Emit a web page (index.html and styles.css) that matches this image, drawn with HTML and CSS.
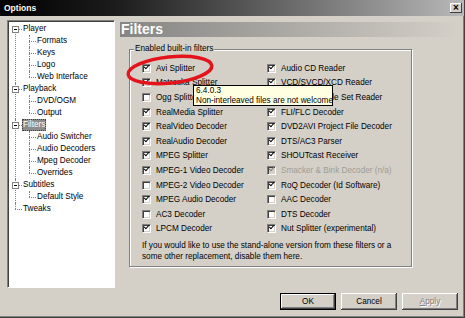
FILE: index.html
```html
<!DOCTYPE html>
<html lang="en">
<head>
    <meta charset="UTF-8">
    <title>Options</title>
    <link rel="stylesheet" href="styles.css">
</head>
<body>
    <div class="window">
        <div class="titlebar">
            <span class="title">Options</span>
            <span class="close">&times;</span>
        </div>

        <div class="content">
            <div class="tree-panel">
                <ul class="tree">
                    <li><span class="exp"></span><span class="label">Player</span>
                        <ul>
                            <li><span class="label">Formats</span></li>
                            <li><span class="label">Keys</span></li>
                            <li><span class="label">Logo</span></li>
                            <li><span class="label">Web Interface</span></li>
                        </ul>
                    </li>
                    <li><span class="exp"></span><span class="label">Playback</span>
                        <ul>
                            <li><span class="label">DVD/OGM</span></li>
                            <li><span class="label">Output</span></li>
                        </ul>
                    </li>
                    <li><span class="exp"></span><span class="label selected">Filters</span>
                        <ul>
                            <li><span class="label">Audio Switcher</span></li>
                            <li><span class="label">Audio Decoders</span></li>
                            <li><span class="label">Mpeg Decoder</span></li>
                            <li><span class="label">Overrides</span></li>
                        </ul>
                    </li>
                    <li><span class="exp"></span><span class="label">Subtitles</span>
                        <ul>
                            <li><span class="label">Default Style</span></li>
                        </ul>
                    </li>
                    <li><span class="label">Tweaks</span></li>
                </ul>
            </div>

            <div class="page">
                <div class="page-header">Filters</div>

                <div class="group">
                    <div class="legend">Enabled built-in filters</div>
                    <div class="filters">
                        <label class="item"><span class="cb on"></span>Avi Splitter</label>
                        <label class="item"><span class="cb on"></span>Matroska Splitter</label>
                        <label class="item"><span class="cb"></span>Ogg Splitter</label>
                        <label class="item"><span class="cb on"></span>RealMedia Splitter</label>
                        <label class="item"><span class="cb on"></span>RealVideo Decoder</label>
                        <label class="item"><span class="cb on"></span>RealAudio Decoder</label>
                        <label class="item"><span class="cb on"></span>MPEG Splitter</label>
                        <label class="item"><span class="cb on"></span>MPEG-1 Video Decoder</label>
                        <label class="item"><span class="cb"></span>MPEG-2 Video Decoder</label>
                        <label class="item"><span class="cb on"></span>MPEG Audio Decoder</label>
                        <label class="item"><span class="cb"></span>AC3 Decoder</label>
                        <label class="item"><span class="cb on"></span>LPCM Decoder</label>

                        <label class="item"><span class="cb on"></span>Audio CD Reader</label>
                        <label class="item"><span class="cb on"></span>VCD/SVCD/XCD Reader</label>
                        <label class="item"><span class="cb on"></span>DVD Video Title Set Reader</label>
                        <label class="item"><span class="cb on"></span>FLI/FLC Decoder</label>
                        <label class="item"><span class="cb on"></span>DVD2AVI Project File Decoder</label>
                        <label class="item"><span class="cb on"></span>DTS/AC3 Parser</label>
                        <label class="item"><span class="cb on"></span>SHOUTcast Receiver</label>
                        <label class="item disabled"><span class="cb on"></span>Smacker &amp; Bink Decoder (n/a)</label>
                        <label class="item"><span class="cb on"></span>RoQ Decoder (Id Software)</label>
                        <label class="item"><span class="cb"></span>AAC Decoder</label>
                        <label class="item"><span class="cb"></span>DTS Decoder</label>
                        <label class="item"><span class="cb on"></span>Nut Splitter (experimental)</label>
                    </div>
                    <p class="note">If you would like to use the stand-alone version from these filters or a<br>some other replacement, disable them here.</p>
                </div>

                <!-- tooltip shown over the Avi Splitter row -->
                <div class="tooltip">6.4.0.3<br>Non-interleaved files are not welcome</div>

                <!-- red marker circled round the first filter -->
                <svg class="highlight" width="92" height="36" viewBox="0 0 92 36">
                    <ellipse cx="46" cy="18" rx="42" ry="13" transform="rotate(-6 46 18)"
                             fill="none" stroke="#e3141c" stroke-width="3.6"/>
                </svg>
            </div>
        </div>

        <div class="buttons">
            <button class="btn default">OK</button>
            <button class="btn">Cancel</button>
            <button class="btn" disabled><u>A</u>pply</button>
        </div>
    </div>
</body>
</html>
```

FILE: styles.css
```css
body {
    margin: 0;
    font-family: "Liberation Sans", Arial, sans-serif;
    font-size: 8.2px;
    color: #000;
    background-color: #d4d0c8;
}
.window {
    width: 465px;
    height: 318px;
    box-sizing: border-box;
    background-color: #d4d0c8;
    border-right: 1px solid #404040;
    border-bottom: 1px solid #404040;
    box-shadow: inset -1px -1px #808080;
    overflow: hidden;
}
.titlebar {
    height: 16px;
    display: flex;
    align-items: center;
    justify-content: space-between;
    padding: 0 2px 0 4px;
    background: linear-gradient(to right, #000 0%, #1c1c1c 25%, #b8b8b8 100%);
}
.title {
    color: #fff;
    font-weight: bold;
    font-size: 8.5px;
}
.close {
    width: 12px;
    height: 10px;
    line-height: 10px;
    text-align: center;
    font-size: 10px;
    font-weight: bold;
    background-color: #d4d0c8;
    box-shadow: inset -1px -1px #404040, inset 1px 1px #fff;
}
.content {
    display: flex;
    gap: 5px;
    padding: 4px 0 0 7px;
}

/* tree */
.tree-panel {
    width: 108px;
    height: 268px;
    box-sizing: border-box;
    background-color: #fff;
    border: 1px solid;
    border-color: #808080 #fff #fff #808080;
    box-shadow: inset 1px 1px #404040;
}
.tree, .tree ul {
    list-style: none;
    margin: 0;
    padding: 0;
}
.tree {
    padding-top: 2px;
}
.tree li {
    position: relative;
    padding-left: 14px;
}
.tree li::before {
    content: '';
    position: absolute;
    left: 7px;
    top: 0;
    bottom: 0;
    border-left: 1px dotted #808080;
}
.tree > li:first-child::before {
    top: 6px;
}
.tree li:last-child::before {
    bottom: auto;
    height: 6px;
}
.tree li::after {
    content: '';
    position: absolute;
    left: 7px;
    top: 6px;
    width: 7px;
    border-top: 1px dotted #808080;
}
.exp {
    position: absolute;
    left: 4px;
    top: 3px;
    width: 7px;
    height: 7px;
    box-sizing: border-box;
    border: 1px solid #808080;
    background-color: #fff;
    z-index: 1;
}
.exp::after {
    content: '';
    position: absolute;
    left: 1px;
    top: 2px;
    width: 3px;
    border-top: 1px solid #000;
}
.label {
    display: inline-block;
    height: 12px;
    line-height: 12px;
    padding: 0 1px;
    white-space: nowrap;
}
.label.selected {
    background-color: #8c8c8c;
    color: #fff;
    outline: 1px dotted #404040;
    outline-offset: -1px;
}

/* filters page */
.page {
    position: relative;
    width: 340px;
    padding-top: 2px;
}
.page-header {
    height: 15px;
    line-height: 15px;
    padding-left: 1px;
    font-size: 14px;
    font-weight: bold;
    color: #fff;
    background: linear-gradient(to right, #858585 0%, #a8a6a2 45%, #d4d0c8 100%);
}
.group {
    width: 283px;
    box-sizing: border-box;
    margin: 12px 0 0 9px;
    padding: 0 0 4px 12px;
    border: 1px solid #808080;
    box-shadow: inset 1px 1px #fff, 1px 1px #fff;
}
.legend {
    width: fit-content;
    margin: -6px 0 0 -8px;
    padding: 0 1px;
    line-height: 10px;
    background-color: #d4d0c8;
}
.filters {
    display: grid;
    grid-template-columns: 125px 1fr;
    grid-template-rows: repeat(12, 14.6px);
    grid-auto-flow: column;
    margin-top: 7px;
}
.item {
    display: flex;
    align-items: center;
    white-space: nowrap;
}
.item.disabled {
    color: #a09c94;
}
.cb {
    position: relative;
    width: 9px;
    height: 9px;
    box-sizing: border-box;
    margin-right: 5px;
    background-color: #fff;
    border: 1px solid;
    border-color: #808080 #fff #fff #808080;
    box-shadow: inset 1px 1px #404040, inset -1px -1px #d4d0c8;
    flex-shrink: 0;
}
.cb.on::after {
    content: '';
    position: absolute;
    left: 1px;
    top: 0;
    width: 4px;
    height: 2px;
    border-left: 1.5px solid #000;
    border-bottom: 1.5px solid #000;
    transform: rotate(-48deg);
}
.disabled .cb {
    background-color: #d4d0c8;
}
.disabled .cb.on::after {
    border-color: #808080;
}
.note {
    margin: 5px 0 0 0;
    line-height: 10.6px;
}
.tooltip {
    position: absolute;
    left: 73px;
    top: 65px;
    width: 140px;
    height: 21px;
    box-sizing: border-box;
    padding: 0 0 0 2px;
    line-height: 10px;
    background-color: #ffffe1;
    border: 1px solid #000;
    white-space: nowrap;
}
.highlight {
    position: absolute;
    left: 4px;
    top: 32px;
}

/* dialog buttons */
.buttons {
    display: flex;
    justify-content: flex-end;
    gap: 5px;
    margin-top: 5px;
    padding-right: 6px;
}
.btn {
    width: 56px;
    height: 17px;
    padding: 0;
    font-family: inherit;
    font-size: 8.2px;
    color: #000;
    background-color: #d4d0c8;
    border: none;
    box-shadow: inset -1px -1px #404040, inset 1px 1px #fff, inset -2px -2px #808080;
}
.btn.default {
    border: 1px solid #000;
}
.btn:disabled {
    color: #808080;
    text-shadow: 1px 1px #fff;
}
.btn u {
    text-decoration: underline;
}
```
